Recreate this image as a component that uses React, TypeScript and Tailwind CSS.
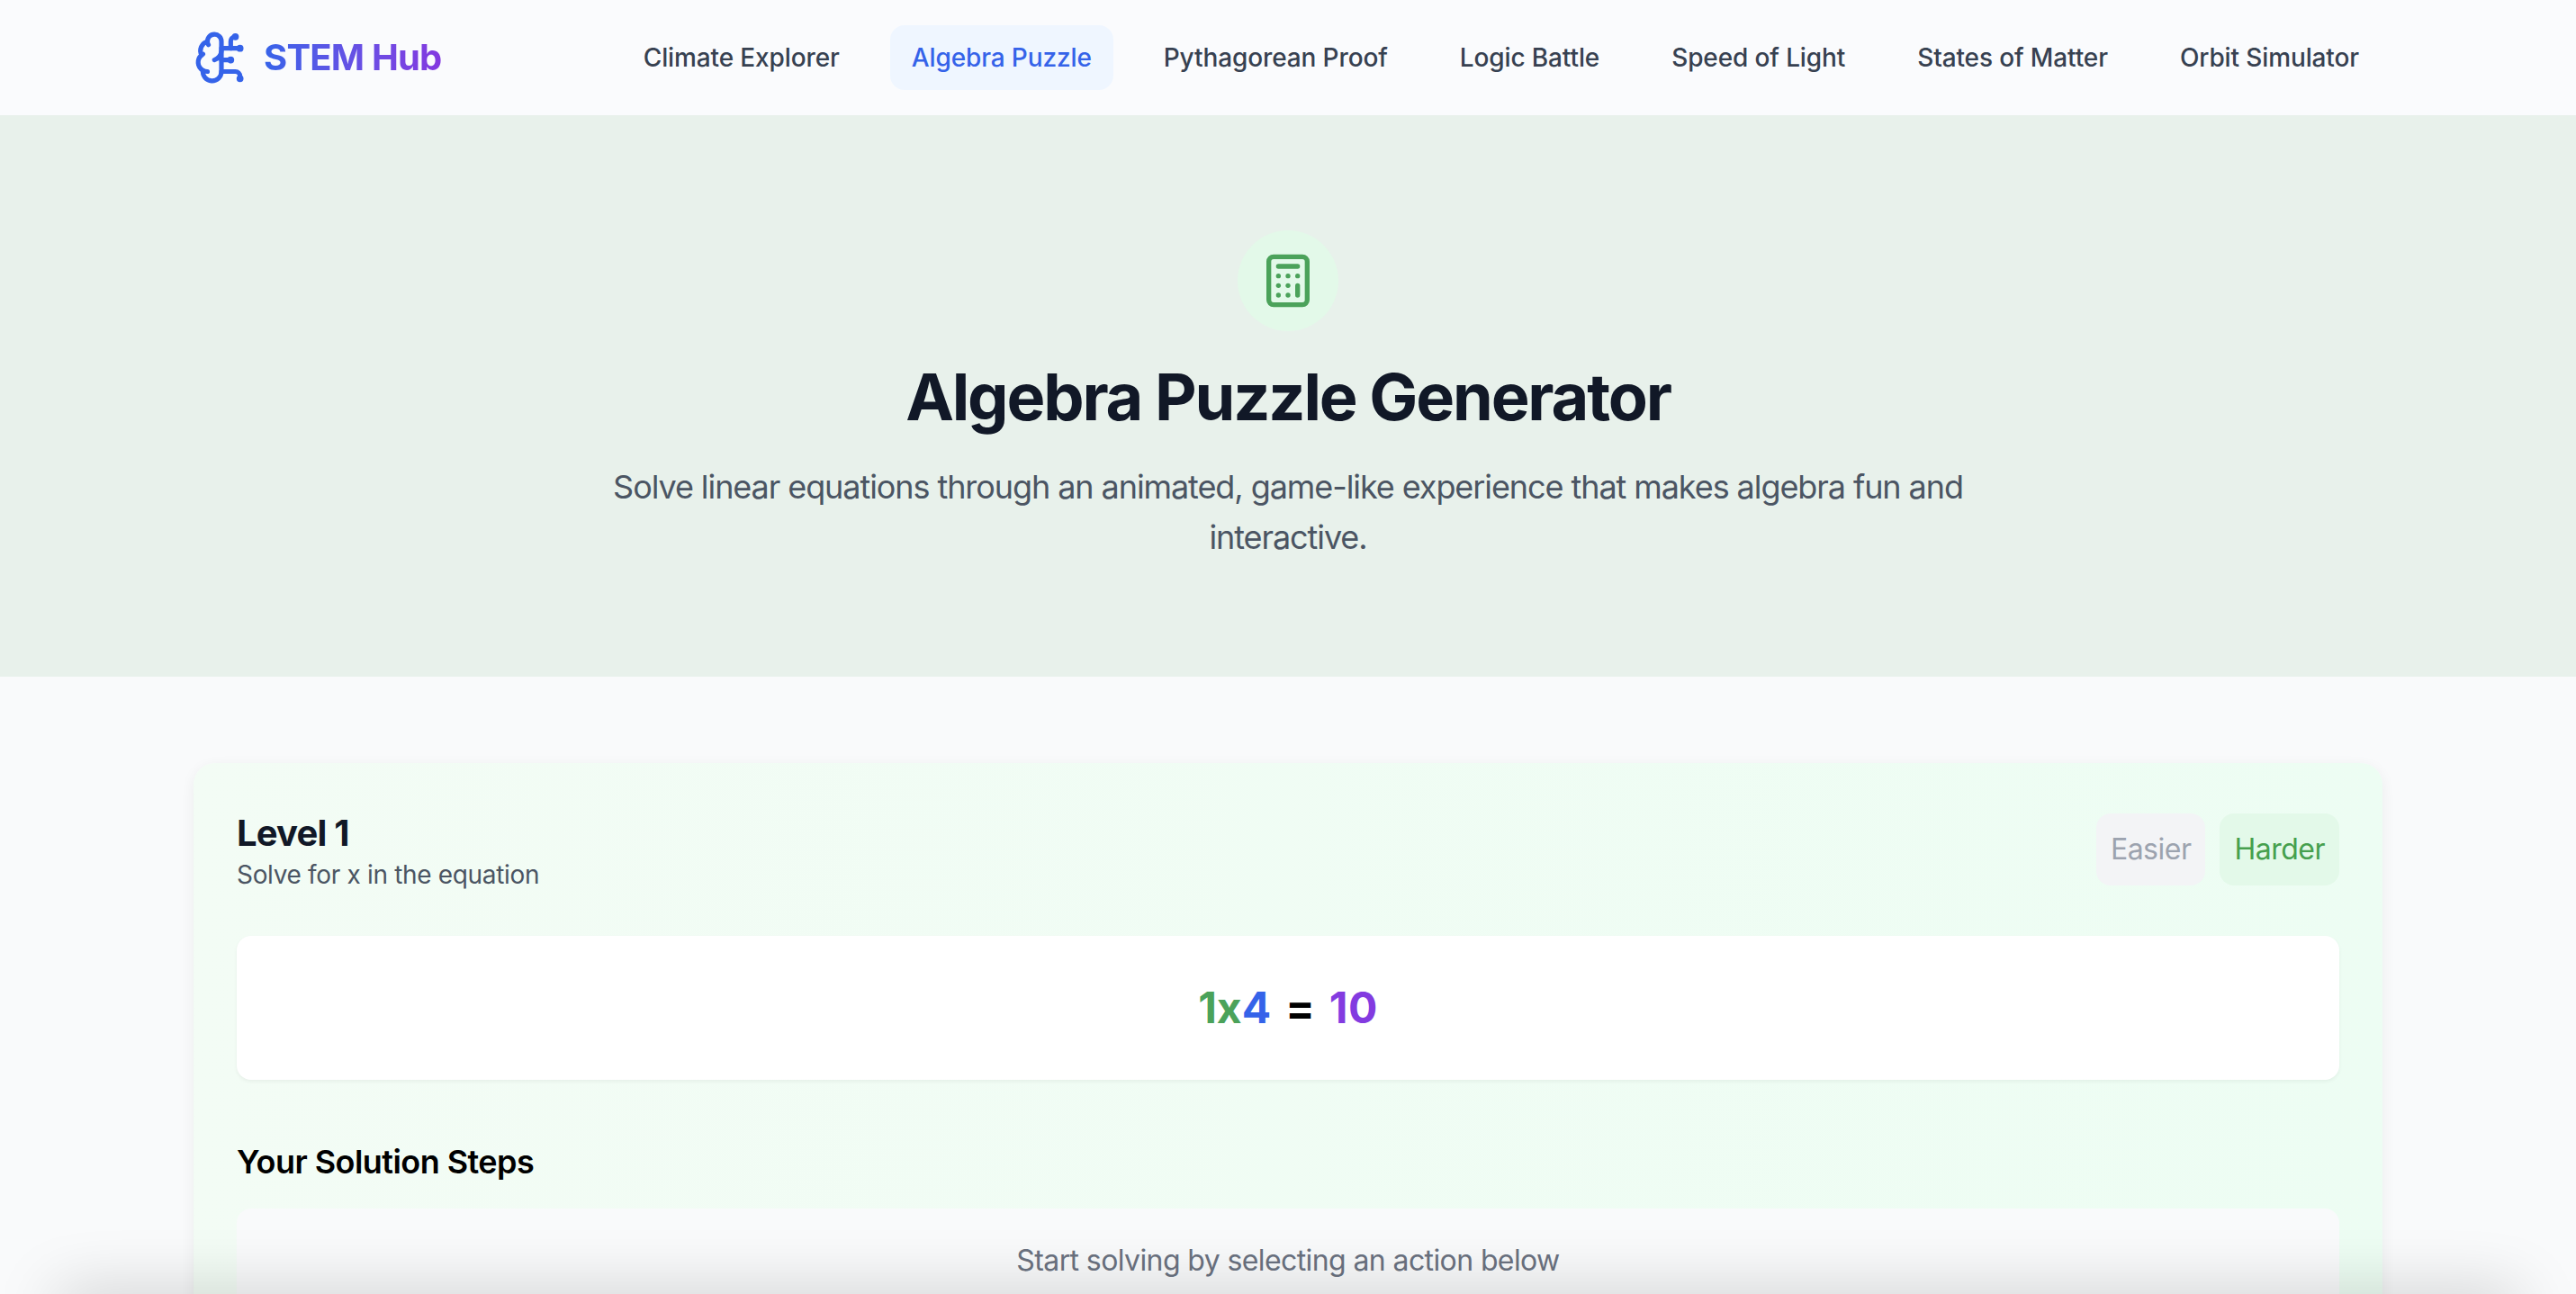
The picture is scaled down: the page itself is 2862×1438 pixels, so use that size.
import { BrainCircuit, Calculator } from "lucide-react";

const links = [
  "Climate Explorer",
  "Algebra Puzzle",
  "Pythagorean Proof",
  "Logic Battle",
  "Speed of Light",
  "States of Matter",
  "Orbit Simulator",
];

export default function App() {
  return (
    <div className="relative h-[1438px] overflow-hidden bg-[#f9fafb] font-['Inter',sans-serif]">
      <header className="h-[128px] bg-[#fafbfd]">
        <div className="mx-auto flex h-full max-w-[2560px] items-center justify-between px-[64px]">
          <div className="flex items-center gap-[16px]">
            <BrainCircuit className="h-[62px] w-[62px] text-[#3563e9]" strokeWidth={2} />
            <span className="bg-gradient-to-r from-[#3563e9] to-[#8338e0] bg-clip-text text-[40px] leading-[56px] font-bold tracking-[-0.8px] text-transparent">
              STEM Hub
            </span>
          </div>
          <nav className="mr-[2px] flex gap-[32px]">
            {links.map((link) => (
              <a
                key={link}
                className={
                  link === "Algebra Puzzle"
                    ? "rounded-[16px] bg-[#eff6ff] px-[24px] py-[16px] text-[28px] leading-[40px] font-medium tracking-[-0.12px] text-[#3563e9]"
                    : "rounded-[16px] px-[24px] py-[16px] text-[28px] leading-[40px] font-medium tracking-[-0.12px] text-[#374151]"
                }
              >
                {link}
              </a>
            ))}
          </nav>
        </div>
      </header>

      <section className="flex h-[624px] flex-col items-center bg-[#e8f1eb] pt-[128px]">
        <div className="flex h-[112px] w-[112px] items-center justify-center rounded-full bg-[#e3f9e9]">
          <Calculator className="h-[64px] w-[64px] text-[#4ba25a]" strokeWidth={2} />
        </div>
        <h1 className="mt-[33px] text-[72px] leading-[80px] font-bold tracking-[-0.03em] text-[#111827]">
          Algebra Puzzle Generator
        </h1>
        <p className="mt-[32px] max-w-[1536px] text-center text-[36px] leading-[56px] tracking-[-0.03em] text-[#4b5563]">
          Solve linear equations through an animated, game-like experience that makes algebra fun and interactive.
        </p>
      </section>

      <main className="mx-auto max-w-[2560px] px-[64px] pt-[96px]">
        <div className="rounded-[24px] bg-gradient-to-r from-[#f3fcf5] to-[#edfdf3] px-[48px] pt-[56px] pb-[48px] shadow-[0_4px_16px_rgba(0,0,0,0.06)]">
          <div className="flex items-start justify-between">
            <div>
              <h2 className="pt-[2px] text-[40px] leading-[40px] font-bold tracking-[-0.8px] text-[#111827]">Level 1</h2>
              <p className="mt-[6px] text-[28px] leading-[40px] tracking-[-0.33px] text-[#4b5563]">
                Solve for x in the equation
              </p>
            </div>
            <div className="flex gap-[16px]">
              <button className="rounded-[16px] bg-[#f3f4f6] px-[16px] py-[16px] text-[32px] leading-[48px] tracking-[-0.5px] text-[#9ca3af]">
                Easier
              </button>
              <button className="rounded-[16px] bg-[#e3f9e9] px-[16px] py-[16px] text-[32px] leading-[48px] tracking-[-0.5px] text-[#46a04e]">
                Harder
              </button>
            </div>
          </div>

          <div className="mt-[48px] flex h-[160px] items-center justify-center rounded-[16px] bg-white text-[48px] font-bold shadow-[0_2px_4px_rgba(0,0,0,0.05)]">
            <span className="text-[#4ba25a]">1x</span>
            <span className="text-[#3563e9]">4</span>
            <span className="mx-[16px] text-black">=</span>
            <span className="tracking-[0.5px] text-[#833be0]">10</span>
          </div>

          <h3 className="mt-[63px] text-[36px] leading-[56px] font-semibold tracking-[-0.55px] text-black">
            Your Solution Steps
          </h3>
          <div className="mt-[24px] rounded-[16px] bg-[#f9fafb] px-[32px] pt-[34px] pb-[32px] text-center text-[32px] leading-[48px] tracking-[-0.6px] text-[#6b7280]">
            Start solving by selecting an action below
          </div>
        </div>
      </main>

      {/* window shadow along the bottom edge */}
      <div className="absolute top-[1438px] right-[64px] left-[64px] h-[40px] shadow-[0_0_70px_rgba(0,0,0,0.22)]" />
    </div>
  );
}
